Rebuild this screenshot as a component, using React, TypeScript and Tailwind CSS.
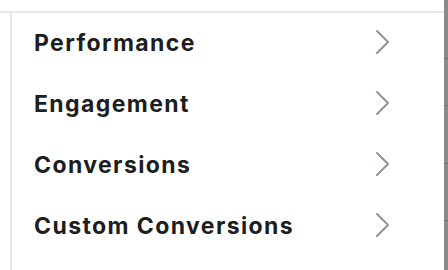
const ITEMS = ["Performance", "Engagement", "Conversions", "Custom Conversions"];

// dimmed rows of the page behind the panel, seen at the right edge
const EDGE_LINES = [58, 105, 163, 220];

function Chevron() {
  return (
    <svg width="16" height="26" viewBox="0 0 16 26" fill="none" className="-mt-[3px] shrink-0">
      <polyline
        points="3,2 14,13 3,24"
        stroke="#8d949e"
        strokeWidth="2"
        strokeLinecap="round"
        strokeLinejoin="round"
      />
    </svg>
  );
}

export default function App() {
  return (
    <div className="flex h-[270px] w-[448px] overflow-hidden bg-white font-['Inter','Liberation_Sans',sans-serif]">
      <div className="flex flex-1 flex-col pt-[11px]">
        <div className="flex flex-1 border-t-2 border-[#e4e6eb]">
          <div className="ml-[10px] flex flex-1 flex-col border-l-2 border-[#e4e6eb]">
            {ITEMS.map((label) => (
              <div key={label} className="flex h-[61px] items-center justify-between pl-[22px] pr-[54px]">
                <span className="text-[23px] font-bold tracking-[1.4px] text-[#1c1e21]">{label}</span>
                <Chevron />
              </div>
            ))}
          </div>
        </div>
      </div>
      <div className="flex w-1 flex-col bg-[#8a8a8a]">
        {EDGE_LINES.map((y, i) => (
          <div
            key={y}
            className="h-px w-full bg-[#6f6f6f]"
            style={{ marginTop: i === 0 ? y : y - EDGE_LINES[i - 1] - 1 }}
          />
        ))}
      </div>
    </div>
  );
}
